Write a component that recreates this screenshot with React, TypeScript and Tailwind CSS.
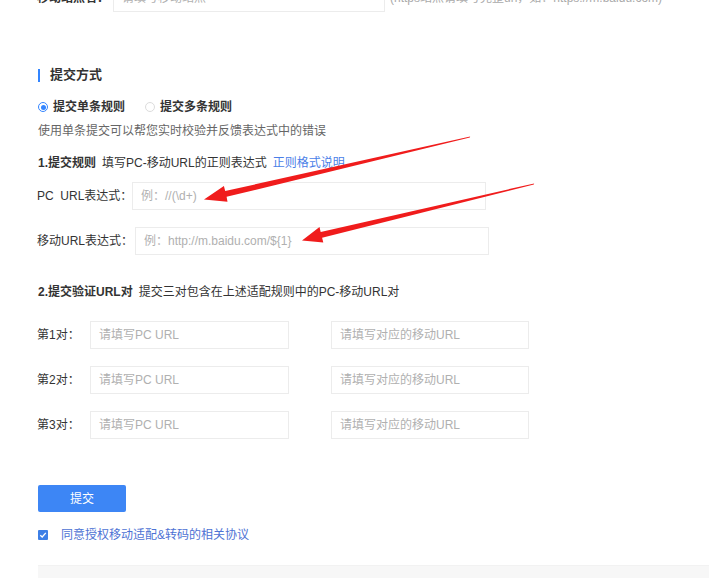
import React from "react";

const font = { fontFamily: '"Liberation Sans", "Noto Sans CJK SC", sans-serif' };

function Input({ w, placeholder }: { w: string; placeholder: string }) {
  return (
    <div
      className={`${w} h-[28px] border border-[#ececec] bg-white flex items-center px-[8px] text-[12px] text-[#b0b0b0] shrink-0 whitespace-nowrap`}
    >
      {placeholder}
    </div>
  );
}

export default function App() {
  return (
    <div className="relative w-[709px] h-[578px] overflow-hidden bg-white" style={font}>
      <div className="flex flex-col pl-[37px]">
        {/* clipped top row */}
        <div className="flex items-center h-[28px] mt-[-16px]">
          <span className="text-[12px] font-bold text-[#333] w-[72px] whitespace-nowrap">移动站点名：</span>
          <div className="ml-[4px] w-[272px] h-[28px] border border-[#ececec] flex items-center px-[8px] text-[12px] text-[#b0b0b0] whitespace-nowrap">
            请填写移动站点
          </div>
          <span className="ml-[5px] text-[12px] text-[#aaa] whitespace-nowrap">
            (https站点请填写完整url，如：https://m.baidu.com)
          </span>
        </div>

        {/* section title */}
        <div className="flex items-center h-[20px] mt-[53px]">
          <div className="w-[2px] h-[13px] bg-[#3385ff] ml-[1px]" />
          <span className="ml-[10px] text-[13px] font-bold text-[#333]">提交方式</span>
        </div>

        {/* radios */}
        <div className="flex items-center h-[16px] mt-[14px] text-[12px] text-[#333]">
          <span className="ml-[1px] w-[10px] h-[10px] rounded-full border border-[#3385ff] flex items-center justify-center">
            <span className="w-[5px] h-[5px] rounded-full bg-[#3385ff]" />
          </span>
          <span className="ml-[5px] font-bold">提交单条规则</span>
          <span className="ml-[20px] w-[10px] h-[10px] rounded-full border border-[#dcdcdc]" />
          <span className="ml-[5px] font-bold">提交多条规则</span>
        </div>

        <div className="h-[16px] mt-[8px] ml-[1px] text-[12px] text-[#666] leading-[16px] whitespace-nowrap">
          使用单条提交可以帮您实时校验并反馈表达式中的错误
        </div>

        <div className="flex items-center h-[16px] mt-[16px] ml-[1px] text-[12px] text-[#333] whitespace-nowrap">
          <span className="font-bold">1.提交规则</span>
          <span className="ml-[6px]">填写PC-移动URL的正则表达式</span>
          <span className="ml-[6px] text-[#4a7ee8]">正则格式说明</span>
        </div>

        <div className="flex items-center mt-[11px]">
          <span className="text-[12px] text-[#333] w-[95px] whitespace-nowrap">PC&nbsp; URL表达式：</span>
          <Input w="w-[354px]" placeholder="例：//(\d+)" />
        </div>

        <div className="flex items-center mt-[17px]">
          <span className="text-[12px] text-[#333] w-[98px] whitespace-nowrap">移动URL表达式：</span>
          <Input w="w-[354px]" placeholder="例：http://m.baidu.com/${1}" />
        </div>

        <div className="flex items-center h-[16px] mt-[29px] ml-[1px] text-[12px] text-[#333] whitespace-nowrap">
          <span className="font-bold">2.提交验证URL对</span>
          <span className="ml-[6px]">提交三对包含在上述适配规则中的PC-移动URL对</span>
        </div>

        {["第1对：", "第2对：", "第3对："].map((l, i) => (
          <div key={l} className={`flex items-center ${i === 0 ? "mt-[21px]" : "mt-[17px]"}`}>
            <span className="text-[12px] text-[#333] w-[53px] whitespace-nowrap">{l}</span>
            <Input w="w-[199px]" placeholder="请填写PC URL" />
            <div className="w-[42px]" />
            <Input w="w-[198px]" placeholder="请填写对应的移动URL" />
          </div>
        ))}

        <button className="mt-[46px] ml-[1px] w-[88px] h-[27px] rounded-[2px] bg-[#3d86f5] text-white text-[12px] flex items-center justify-center">
          提交
        </button>

        <div className="flex items-center h-[16px] mt-[15px] ml-[1px]">
          <span className="w-[10px] h-[10px] rounded-[1px] bg-[#3d7fe6] flex items-center justify-center">
            <svg width="8" height="8" viewBox="0 0 8 8">
              <path d="M1.3 4.2 L3.2 6 L6.8 1.8" stroke="white" strokeWidth="1.3" fill="none" />
            </svg>
          </span>
          <span className="ml-[13px] text-[12px] text-[#4d72d4] whitespace-nowrap">同意授权移动适配&amp;转码的相关协议</span>
        </div>

        <div className="mt-[22px] ml-[1px] h-[30px] bg-[#f7f7f7] border-t border-[#f2f2f2]" />
      </div>

      {/* red annotation arrows */}
      <svg className="absolute left-0 top-0 pointer-events-none" width="709" height="578">
        <polygon
          points="470.2,136.4 225.2,191.0 223.9,186.1 204,199.5 227.5,201.7 226.6,196.8 469.8,137.6"
          fill="#f01c1c"
        />
        <polygon
          points="534.2,183.4 320.7,231.9 319.5,227.1 302,240.5 323.3,242.6 322.1,237.7 533.8,184.6"
          fill="#f01c1c"
        />
      </svg>
    </div>
  );
}
